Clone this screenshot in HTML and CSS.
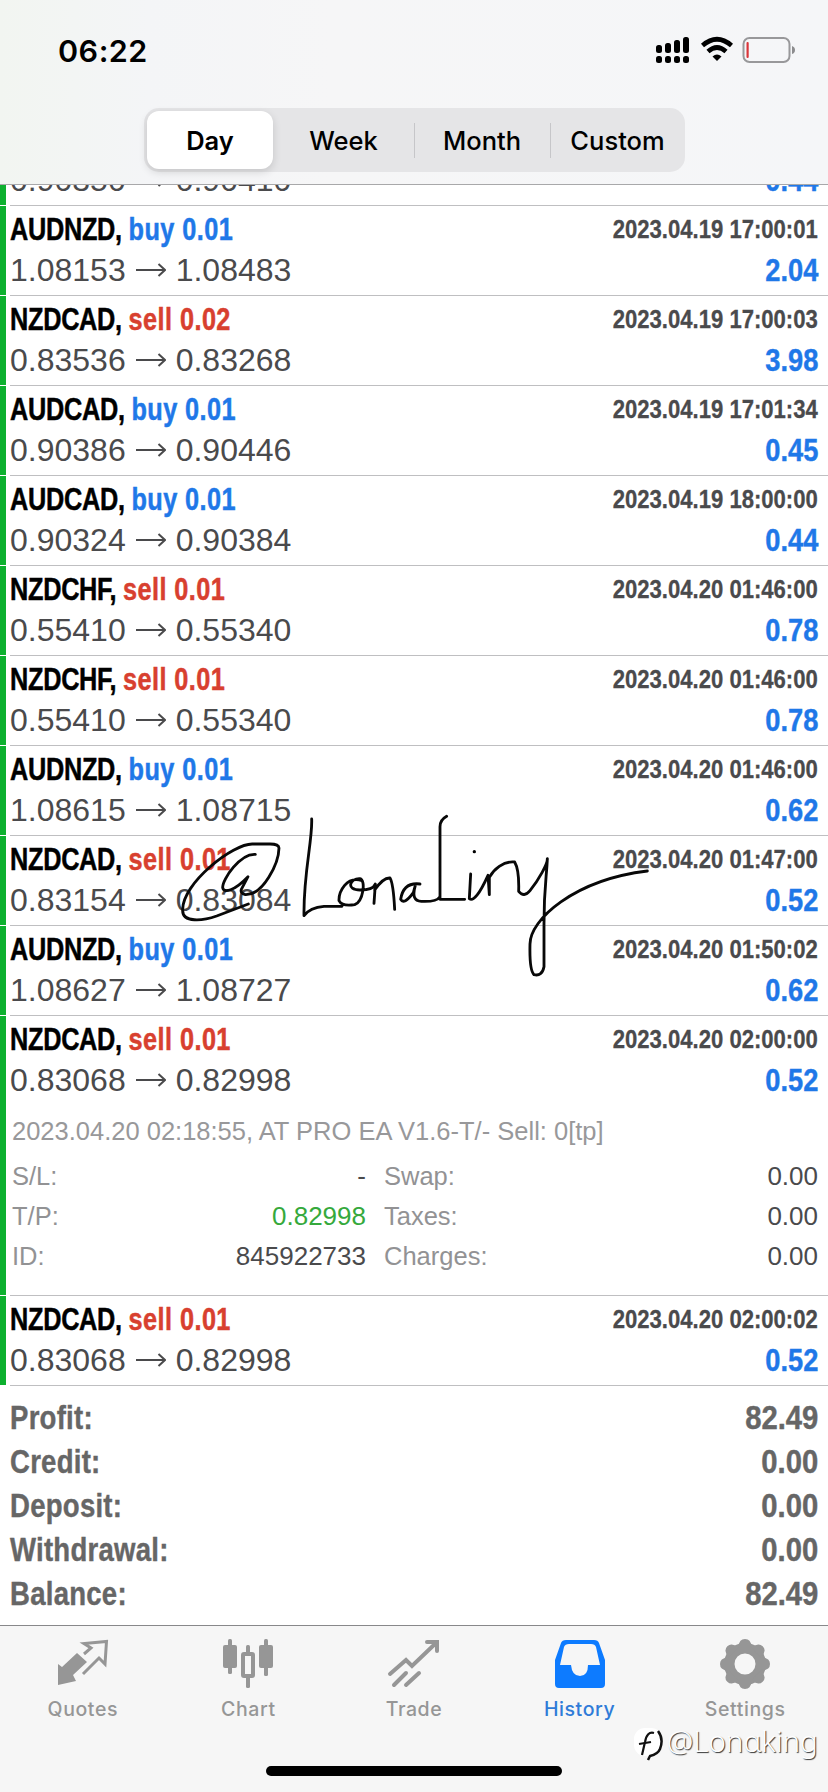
FILE: index.html
```
<!DOCTYPE html>
<html lang="en">
<head>
<meta charset="utf-8">
<title>History</title>
<link rel="stylesheet" href="styles.css">
</head>
<body>
<svg class="defs" aria-hidden="true"><symbol id="arrow" viewBox="0 0 30 16"><path d="M0 8H29M22.500 2L29 8L22.500 14" fill="none" stroke="currentColor" stroke-width="2"/></symbol></svg>
<div class="screen">
  <header class="header">
    <div class="status">
      <span class="time">06:22</span>
      <svg class="status-icons" width="142" height="30" viewBox="0 0 142 30">
        <g fill="#000">
          <rect x="0" y="10" width="6" height="8" rx="2.500"/><rect x="9" y="8" width="6" height="10" rx="2.500"/><rect x="18" y="5" width="6" height="13" rx="2.500"/><rect x="27" y="2" width="6" height="16" rx="2.500"/>
          <rect x="0" y="21" width="6" height="7" rx="2.500"/><rect x="9" y="21" width="6" height="7" rx="2.500"/><rect x="18" y="21" width="6" height="7" rx="2.500"/><rect x="27" y="21" width="6" height="7" rx="2.500"/>
          <path d="M61 26L56.500 21.500Q61 17.500 65.500 21.500Z"/>
        </g>
        <g fill="none" stroke="#000" stroke-width="4.600"><path d="M46.500 10.500Q61-2 75.500 10.500"/><path d="M52 16.500Q61 8.500 70 16.500"/></g>
        <rect x="87.500" y="3" width="46" height="24" rx="6" fill="none" stroke="#98989a" stroke-width="2"/>
        <rect x="90.500" y="7" width="2.200" height="16" rx="1" fill="#d9363a"/>
        <path d="M136 11Q139 12 139 15T136 19Z" fill="#8c8c8e"/>
      </svg>
    </div>
    <nav class="segments">
      <span class="segment segment-active">Day</span><span class="segment">Week</span><span class="segment segment-divided">Month</span><span class="segment segment-divided">Custom</span>
    </nav>
  </header>

  <main class="list">
    <section class="deal deal-clipped"><div class="body"><div class="line"><span class="name">AUDCAD, <b class="buy">buy 0.01</b></span><span class="date">2023.04.19 17:00:00</span></div><div class="line"><span class="prices">0.90350<svg class="arrow"><use href="#arrow"/></svg>0.90410</span><span class="value">0.44</span></div></div></section>
    <section class="deal"><div class="body"><div class="line"><span class="name">AUDNZD, <b class="buy">buy 0.01</b></span><span class="date">2023.04.19 17:00:01</span></div><div class="line"><span class="prices">1.08153<svg class="arrow"><use href="#arrow"/></svg>1.08483</span><span class="value">2.04</span></div></div></section>
    <section class="deal"><div class="body"><div class="line"><span class="name">NZDCAD, <b class="sell">sell 0.02</b></span><span class="date">2023.04.19 17:00:03</span></div><div class="line"><span class="prices">0.83536<svg class="arrow"><use href="#arrow"/></svg>0.83268</span><span class="value">3.98</span></div></div></section>
    <section class="deal"><div class="body"><div class="line"><span class="name">AUDCAD, <b class="buy">buy 0.01</b></span><span class="date">2023.04.19 17:01:34</span></div><div class="line"><span class="prices">0.90386<svg class="arrow"><use href="#arrow"/></svg>0.90446</span><span class="value">0.45</span></div></div></section>
    <section class="deal"><div class="body"><div class="line"><span class="name">AUDCAD, <b class="buy">buy 0.01</b></span><span class="date">2023.04.19 18:00:00</span></div><div class="line"><span class="prices">0.90324<svg class="arrow"><use href="#arrow"/></svg>0.90384</span><span class="value">0.44</span></div></div></section>
    <section class="deal"><div class="body"><div class="line"><span class="name">NZDCHF, <b class="sell">sell 0.01</b></span><span class="date">2023.04.20 01:46:00</span></div><div class="line"><span class="prices">0.55410<svg class="arrow"><use href="#arrow"/></svg>0.55340</span><span class="value">0.78</span></div></div></section>
    <section class="deal"><div class="body"><div class="line"><span class="name">NZDCHF, <b class="sell">sell 0.01</b></span><span class="date">2023.04.20 01:46:00</span></div><div class="line"><span class="prices">0.55410<svg class="arrow"><use href="#arrow"/></svg>0.55340</span><span class="value">0.78</span></div></div></section>
    <section class="deal"><div class="body"><div class="line"><span class="name">AUDNZD, <b class="buy">buy 0.01</b></span><span class="date">2023.04.20 01:46:00</span></div><div class="line"><span class="prices">1.08615<svg class="arrow"><use href="#arrow"/></svg>1.08715</span><span class="value">0.62</span></div></div></section>
    <section class="deal"><div class="body"><div class="line"><span class="name">NZDCAD, <b class="sell">sell 0.01</b></span><span class="date">2023.04.20 01:47:00</span></div><div class="line"><span class="prices">0.83154<svg class="arrow"><use href="#arrow"/></svg>0.83084</span><span class="value">0.52</span></div></div></section>
    <section class="deal"><div class="body"><div class="line"><span class="name">AUDNZD, <b class="buy">buy 0.01</b></span><span class="date">2023.04.20 01:50:02</span></div><div class="line"><span class="prices">1.08627<svg class="arrow"><use href="#arrow"/></svg>1.08727</span><span class="value">0.62</span></div></div></section>
    <section class="deal deal-open"><div class="body"><div class="line"><span class="name">NZDCAD, <b class="sell">sell 0.01</b></span><span class="date">2023.04.20 02:00:00</span></div><div class="line"><span class="prices">0.83068<svg class="arrow"><use href="#arrow"/></svg>0.82998</span><span class="value">0.52</span></div>
      <p class="comment">2023.04.20 02:18:55, AT PRO EA V1.6-T/- Sell: 0[tp]</p>
      <div class="details">
        <span>S/L:</span><span class="num">-</span><span>Swap:</span><span class="num">0.00</span>
        <span>T/P:</span><span class="num green">0.82998</span><span>Taxes:</span><span class="num">0.00</span>
        <span>ID:</span><span class="num">845922733</span><span>Charges:</span><span class="num">0.00</span>
      </div></div></section>
    <section class="deal"><div class="body"><div class="line"><span class="name">NZDCAD, <b class="sell">sell 0.01</b></span><span class="date">2023.04.20 02:00:02</span></div><div class="line"><span class="prices">0.83068<svg class="arrow"><use href="#arrow"/></svg>0.82998</span><span class="value">0.52</span></div></div></section>
  </main>

  <section class="totals">
    <div class="total"><span class="total-label">Profit:</span><span class="total-value">82.49</span></div>
    <div class="total"><span class="total-label">Credit:</span><span class="total-value">0.00</span></div>
    <div class="total"><span class="total-label">Deposit:</span><span class="total-value">0.00</span></div>
    <div class="total"><span class="total-label">Withdrawal:</span><span class="total-value">0.00</span></div>
    <div class="total"><span class="total-label">Balance:</span><span class="total-value">82.49</span></div>
  </section>

  <footer class="footer">
    <nav class="tabs">
      <a class="tab"><svg width="52" height="52" viewBox="0 0 52 52"><path d="M1 24L5 27L20 13L30 22L16 35L19 41L1 45Z" fill="currentColor"/><path d="M27 14L34 8L27 3.500L49.500 1.500L48 24L42 18L26 34" fill="none" stroke="currentColor" stroke-width="3"/></svg><span>Quotes</span></a>
      <a class="tab"><svg width="52" height="52" viewBox="0 0 52 52"><g fill="currentColor"><rect x="1" y="5" width="14" height="23" rx="2"/><rect x="6" y="-1" width="4" height="35" rx="1.500"/><rect x="37" y="5" width="14" height="23" rx="2"/><rect x="42" y="-1" width="4" height="37" rx="1.500"/><rect x="24" y="5" width="4" height="10" rx="1.500"/><rect x="24" y="35" width="4" height="13" rx="1.500"/></g><rect x="21" y="14" width="10" height="22" rx="1" fill="none" stroke="currentColor" stroke-width="4"/></svg><span>Chart</span></a>
      <a class="tab"><svg width="52" height="52" viewBox="0 0 52 52"><g fill="none" stroke="currentColor" stroke-width="4" stroke-linecap="round"><path d="M2 34L18 20L24 26L48 3M39 2H49V11"/><path d="M6 45L18 33M18 45L31 33"/></g></svg><span>Trade</span></a>
      <a class="tab tab-active"><svg width="52" height="52" viewBox="0 0 52 52"><path fill="currentColor" fill-rule="evenodd" d="M12 0H40Q44 0 45 3L51 20V44Q51 48 47 48H5Q1 48 1 44V20L7 3Q8 0 12 0ZM15 4Q11 4 10 7L6 25H17Q18 36 26 36T34 25H46L42 7Q41 4 37 4Z"/></svg><span>History</span></a>
      <a class="tab"><svg width="52" height="52" viewBox="0 0 52 52"><g fill="currentColor"><path fill-rule="evenodd" d="M26 3A21 21 0 1 0 26 45A21 21 0 1 0 26 3ZM26 13.500A10.500 10.500 0 1 1 26 34.500A10.500 10.500 0 1 1 26 13.500Z"/><g id="teeth"><path id="tooth" d="M17 8Q20 4 21.500 0.800Q23-1 26-1T30.500 0.800Q32 4 35 8Z"/><use href="#tooth" transform="rotate(45 26 24)"/><use href="#tooth" transform="rotate(90 26 24)"/><use href="#tooth" transform="rotate(135 26 24)"/></g><use href="#teeth" transform="rotate(180 26 24)"/></g></svg><span>Settings</span></a>
    </nav>
    <div class="home-bar"></div>
  </footer>

  <svg class="signature" width="500" height="200" viewBox="0 0 1500 600"><g fill="none" stroke="#080808" stroke-width="8.500" stroke-linecap="round" stroke-linejoin="round">
    <path d="M286 193C240 190 188 268 188 292C190 312 224 302 264 260L244 298Q240 310 256 314C310 316 356 220 357 174Q356 162 330 162H278C220 160 66 280 68 360C66 400 130 392 170 378L265 342"/>
    <path d="M455 87C458 150 430 250 432 377Q450 352 492 349H546M606 272C560 256 536 306 537 332Q546 350 584 344C610 334 618 270 600 266C570 264 556 300 600 300Q640 300 646 282L642 340M644 300Q670 262 690 264Q700 280 704 358M780 282Q730 276 722 328Q732 346 760 308L766 286Q752 334 784 334Q830 336 838 322M860 79Q840 90 840 110V328H914M932 252L928 326Q946 340 984 256L988 314V262C1000 240 1030 212 1064 216Q1078 240 1076 304Q1092 324 1110 302C1136 270 1164 220 1162 206C1160 260 1152 290 1152 400V530Q1146 560 1122 554Q1108 540 1110 462C1110 390 1240 270 1462 243"/></g><circle cx="943" cy="185" r="5"/></svg>
  <div class="watermark"><svg width="32" height="34" viewBox="0 0 32 34"><rect x="1" y="1" width="28" height="28" rx="11" fill="#fff"/><g fill="none" stroke="#111"><path d="M21 6Q14 4 12 15L9 28" stroke-width="2.200"/><path d="M6 17L18 15" stroke-width="2"/><path d="M25 4Q31 12 27 22Q25 27 17 29L15 33" stroke-width="2.500"/></g></svg><span>@Lonɑking</span></div>
</div>
</body>
</html>
```
FILE: styles.css
```
* { box-sizing: border-box; }
body { margin: 0; background: #fff; }
.defs { display: none; }
.screen { position: relative; width: 828px; height: 1792px; display: flex; flex-direction: column; overflow: hidden; background: #fff; font-family: "Liberation Sans", Arial, sans-serif; color: #4a4a4c; }

.header { height: 185px; flex: none; padding-top: 32px; border-bottom: 1px solid #a8a8aa; background: linear-gradient(90deg, #f2f5f1, #f4f5f7 18%, #f6f6f7 40%, #f5f6f8); font-family: Inter, sans-serif; color: #000; }
.status { display: flex; justify-content: space-between; align-items: center; height: 36px; padding: 0 30px 0 58px; }
.time { font-size: 30.500px; font-weight: 600; letter-spacing: .5px; }
.segments { display: grid; grid-template-columns: 126px 141px 136px 1fr; width: 541px; height: 64px; margin: 40px 0 0 144px; padding: 3px 0 3px 3px; border-radius: 15px; background: #e5e5e7; }
.segment { position: relative; display: flex; align-items: center; justify-content: center; font-size: 25.500px; font-weight: 500; }
.segment-active { border-radius: 12px; background: #fff; box-shadow: 0 3px 8px rgba(0, 0, 0, .14); font-weight: 600; }
.segment-divided::before { content: ""; position: absolute; left: 0; top: 12px; bottom: 11px; width: 1px; background: #c6c6c9; }

.list { flex: none; display: flex; flex-direction: column; }
.deal { height: 90px; padding-left: 10px; background: linear-gradient(90deg, #0db02f 6px, transparent 6px) 0 0 / 100% calc(100% - 1px) no-repeat; }
.deal-clipped { height: 21px; display: flex; align-items: flex-end; overflow: hidden; }
.deal-open { height: 280px; }
.body { width: 100%; height: 100%; padding: 3px 10px 0 0; border-bottom: 1px solid #bfbfc1; }
.deal-clipped .body { flex: none; height: 90px; }
.line { display: flex; justify-content: space-between; height: 41px; line-height: 41px; white-space: nowrap; }
.name { font-size: 32px; font-weight: 700; color: #000; letter-spacing: -.35px; -webkit-text-stroke: .5px; transform: scaleX(.79); transform-origin: left; }
.buy, .sell { letter-spacing: .55px; }
.buy { color: #1f78e8; }
.sell { color: #d8402f; }
.date { font-size: 25.500px; font-weight: 700; -webkit-text-stroke: .3px; transform: scaleX(.866); transform-origin: right; }
.prices { font-size: 32px; }
.arrow { width: 30px; height: 16px; margin: 0 10px; vertical-align: 3px; }
.value { font-size: 31px; font-weight: 700; color: #1f78e8; -webkit-text-stroke: .4px; transform: scaleX(.88); transform-origin: right; }
.comment { margin: 8px 0 0 2px; height: 47px; line-height: 45px; font-size: 25.500px; color: #98989a; white-space: nowrap; }
.details { display: grid; grid-template-columns: 100px 254px 1fr 1fr; grid-auto-rows: 40px; line-height: 40px; margin-left: 2px; font-size: 25.500px; color: #929294; }
.details span:nth-child(4n + 3) { padding-left: 18px; }
.details .num { text-align: right; color: #4a4a4c; font-size: 26px; }
.details .green { color: #35a93c; }

.totals { flex: none; height: 239px; padding: 10px 10px 0; }
.total { display: flex; justify-content: space-between; height: 44px; line-height: 44px; font-size: 33px; font-weight: 700; color: #666; -webkit-text-stroke: .4px; }
.total-label { letter-spacing: .3px; transform: scaleX(.835); transform-origin: left; }
.total-value { font-size: 32.500px; transform: scaleX(.9); transform-origin: right; }

.footer { flex: 1; border-top: 1px solid #88888a; background: #f6f6f6; }
.tabs { display: grid; grid-template-columns: repeat(5, 1fr); height: 140px; padding-top: 14px; }
.tab { display: flex; flex-direction: column; align-items: center; gap: 5px; font: 500 19.500px/24px Inter, sans-serif; letter-spacing: .6px; color: #969696; }
.tab svg { overflow: visible; }
.tab-active { color: #0d7bff; }
.tab-active span { color: #2f7bd8; }
.home-bar { width: 296px; height: 10px; margin: 0 auto; border-radius: 5px; background: #000; }

.signature { position: absolute; left: 160px; top: 790px; }
.watermark { position: absolute; left: 633px; top: 1727px; display: flex; align-items: flex-start; gap: 2px; color: #fff; font: 300 29.500px/28px "Noto Sans", sans-serif; text-shadow: 1px 1px 1px #333; }
```
